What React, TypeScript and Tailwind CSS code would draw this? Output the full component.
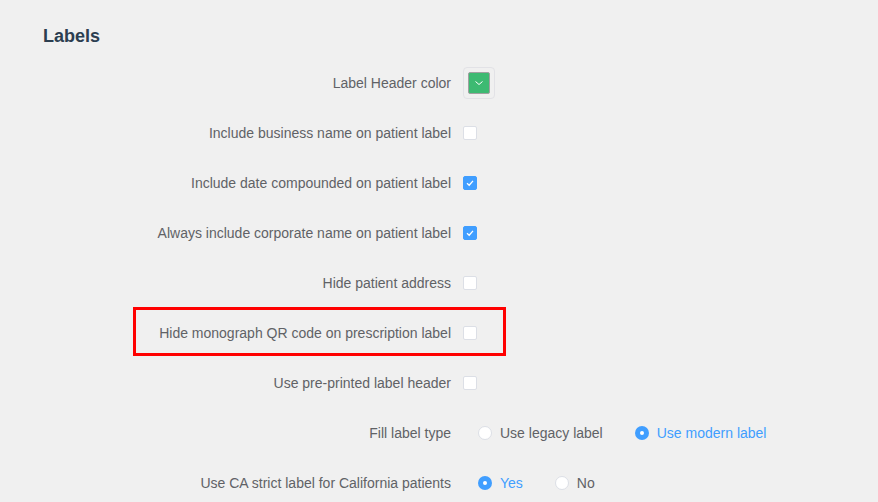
import { useState } from 'react';

type CheckRow = { label: string; checked: boolean; highlight?: boolean };

const checkRows: CheckRow[] = [
  { label: 'Include business name on patient label', checked: false },
  { label: 'Include date compounded on patient label', checked: true },
  { label: 'Always include corporate name on patient label', checked: true },
  { label: 'Hide patient address', checked: false },
  { label: 'Hide monograph QR code on prescription label', checked: false, highlight: true },
  { label: 'Use pre-printed label header', checked: false },
];

const Checkbox = ({ checked }: { checked: boolean }) =>
  checked ? (
    <span className="w-[14px] h-[14px] rounded-[2px] bg-[#409eff] border border-[#409eff] flex items-center justify-center">
      <svg width="10" height="10" viewBox="0 0 10 10">
        <path d="M2 5.2 L4.2 7.2 L8 2.8" fill="none" stroke="white" strokeWidth="1.3" />
      </svg>
    </span>
  ) : (
    <span className="w-[14px] h-[14px] rounded-[2px] bg-white border border-[#dcdfe6]" />
  );

const Radio = ({ checked, label }: { checked: boolean; label: string }) => (
  <label className="flex items-center gap-2 mr-[32px]">
    {checked ? (
      <span className="w-[14px] h-[14px] rounded-full bg-[#409eff] flex items-center justify-center">
        <span className="w-[4px] h-[4px] rounded-full bg-white" />
      </span>
    ) : (
      <span className="w-[14px] h-[14px] rounded-full bg-white border border-[#dcdfe6]" />
    )}
    <span className={checked ? 'text-[#409eff]' : 'text-[#606266]'}>{label}</span>
  </label>
);

const Row = ({ label, children }: { label: string; children: React.ReactNode }) => (
  <div className="h-[50px] flex items-center">
    <div className="w-[420px] pr-3 text-right text-[#606266]">{label}</div>
    <div className="flex items-center">{children}</div>
  </div>
);

export default function App() {
  const [legacy] = useState(false);

  return (
    <div
      className="w-[878px] h-[502px] bg-[#f0f0f0] overflow-hidden pl-[43px] pt-[24px] text-[14px]"
      style={{ fontFamily: '"Liberation Sans", Arial, sans-serif' }}
    >
      <h2 className="h-6 leading-6 text-[18px] font-bold text-[#2c3e50]">Labels</h2>

      <div className="mt-[10px]">
        <Row label="Label Header color">
          <div className="w-[32px] h-[32px] rounded-[4px] border border-[#e2e2e6] p-[4px]">
            <div className="w-full h-full border border-[#a0a0a0] rounded-[2px] bg-[#3dba72] flex items-center justify-center">
              <svg width="12" height="12" viewBox="0 0 12 12">
                <path d="M2.5 4.5 L6 7.5 L9.5 4.5" fill="none" stroke="white" strokeWidth="1" />
              </svg>
            </div>
          </div>
        </Row>

        {checkRows.map((r) =>
          r.highlight ? (
            <div key={r.label} className="relative">
              <div className="absolute left-[90px] top-[-1px] w-[373px] h-[49px] border-[3px] border-[#ff0000]" />
              <Row label={r.label}>
                <Checkbox checked={r.checked} />
              </Row>
            </div>
          ) : (
            <Row key={r.label} label={r.label}>
              <Checkbox checked={r.checked} />
            </Row>
          )
        )}

        <Row label="Fill label type">
          <div className="flex items-center pl-[15px]">
            <Radio checked={legacy} label="Use legacy label" />
            <Radio checked={!legacy} label="Use modern label" />
          </div>
        </Row>

        <Row label="Use CA strict label for California patients">
          <div className="flex items-center pl-[15px]">
            <Radio checked label="Yes" />
            <Radio checked={false} label="No" />
          </div>
        </Row>
      </div>
    </div>
  );
}
